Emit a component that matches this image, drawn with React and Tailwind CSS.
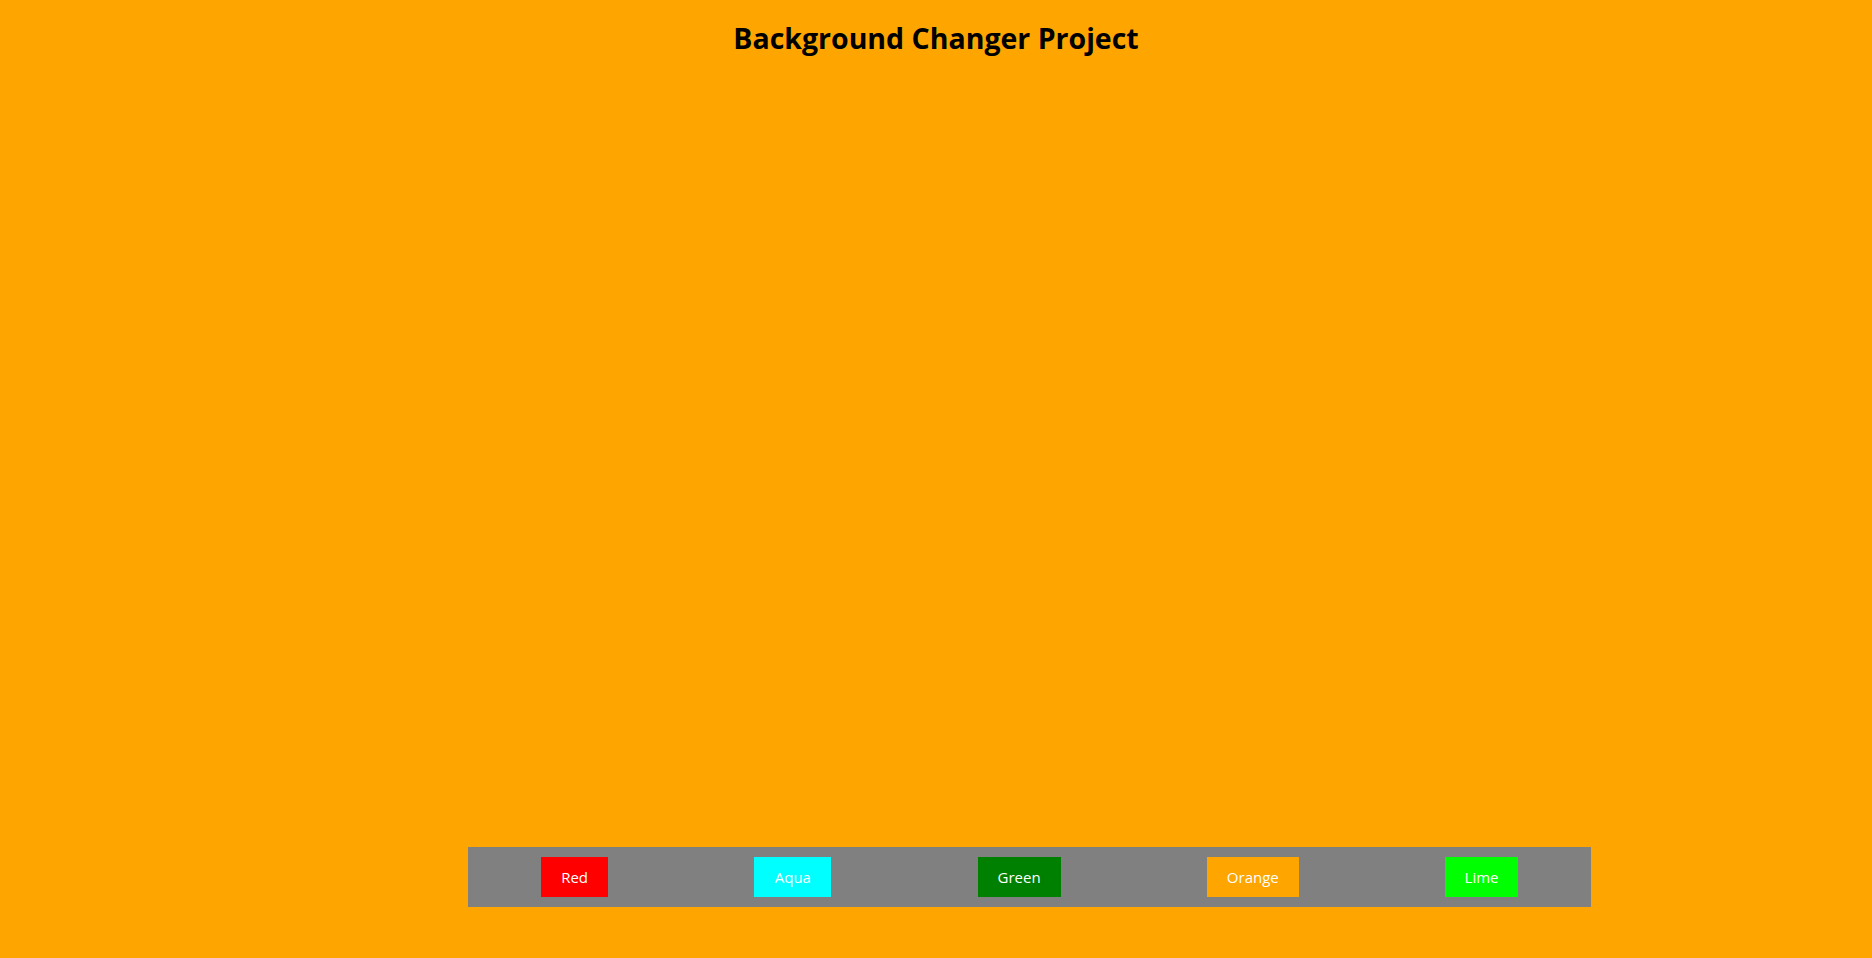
export default function App() {
  const colors = [
    { name: "Red", bg: "bg-[#ff0000]", w: "w-[67px]" },
    { name: "Aqua", bg: "bg-[#00ffff]", w: "w-[77px]" },
    { name: "Green", bg: "bg-[#008000]", w: "w-[83px]" },
    { name: "Orange", bg: "bg-[#ffa500]", w: "w-[92px]" },
    { name: "Lime", bg: "bg-[#00ff00]", w: "w-[73px]" },
  ];
  return (
    <div
      className="h-[958px] w-full overflow-hidden flex flex-col bg-[#ffa500]"
      style={{ fontFamily: '"Open Sans", "Noto Sans", sans-serif' }}
    >
      <h1 className="pt-[20px] text-center text-[28.5px] leading-[36px] font-bold text-black">
        Background Changer Project
      </h1>
      <div className="flex-1" />
      <div className="ml-[25%] w-[60%] mb-[51px] h-[60px] bg-[#808080] flex items-center justify-around">
        {colors.map((c) => (
          <button
            key={c.name}
            className={`${c.bg} ${c.w} h-[40px] text-white text-[15px] flex items-center justify-center`}
          >
            {c.name}
          </button>
        ))}
      </div>
    </div>
  );
}
